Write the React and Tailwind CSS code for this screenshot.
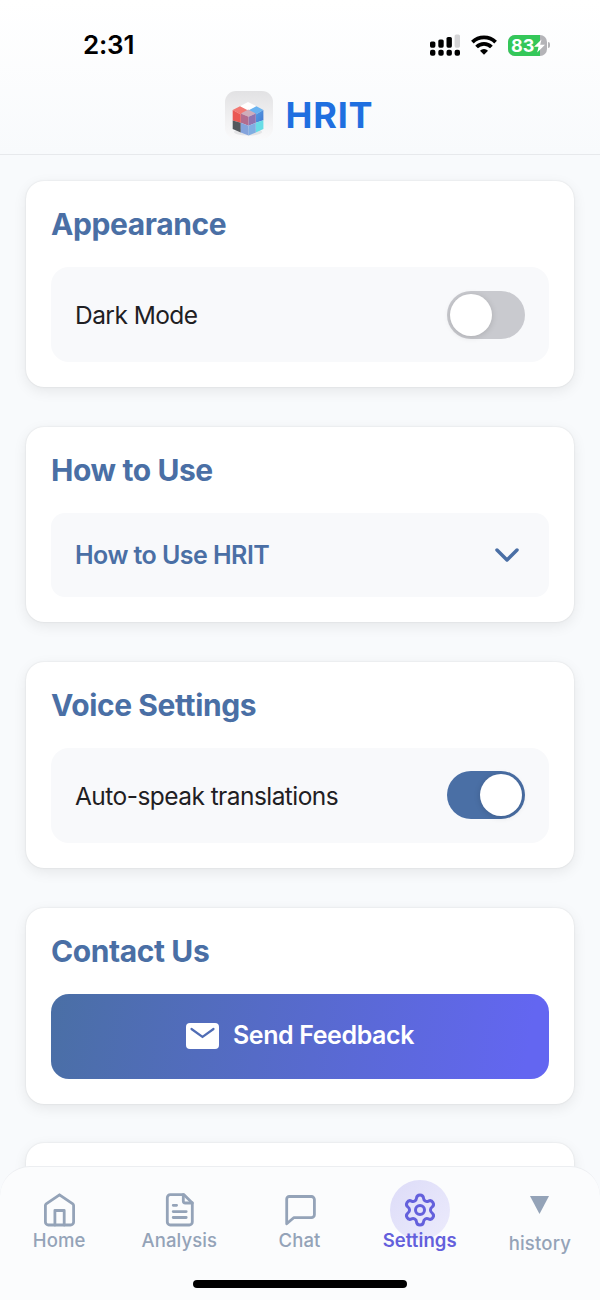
import React, { useState } from 'react';
import { ChevronDown, Settings } from 'lucide-react';
import clsx from 'clsx';

const StatusBar = () => (
  <div className="flex h-[89px] items-center justify-between pl-[83px] pr-[50px] pt-px">
    <span className="text-[26px] font-semibold leading-none tracking-[-0.2px] text-black">2:31</span>
    <div className="flex items-center gap-[11px]">
      <svg className="h-[22px] w-[30px]" viewBox="0 0 30 22">
        <rect x="0" y="7.5" width="5.4" height="6.2" rx="1.6" />
        <rect x="8.3" y="5.5" width="5.4" height="8.2" rx="1.6" />
        <rect x="16.5" y="3" width="5.4" height="10.7" rx="1.6" />
        <rect x="24.6" y="0.5" width="5.4" height="13.2" rx="1.6" fill="#d4d4d6" />
        <rect x="0" y="15.8" width="5.4" height="6" rx="2" />
        <rect x="8.3" y="15.8" width="5.4" height="6" rx="2" />
        <rect x="16.5" y="15.8" width="5.4" height="6" rx="2" />
        <rect x="24.6" y="15.8" width="5.4" height="6" rx="2" />
      </svg>
      <svg className="h-5 w-[26px]" viewBox="0 0 26 20" fill="none" stroke="#000" strokeWidth="3.8">
        <path d="M1.4 7.2a16.6 16.6 0 0 1 23.2 0" />
        <path d="M5.6 12a10.4 10.4 0 0 1 14.8 0" />
        <path d="M13 19.8l-4-4a5.6 5.6 0 0 1 8 0z" fill="#000" stroke="none" />
      </svg>
      <div className="flex items-center gap-px">
        <div className="relative flex h-[21px] w-[39px] items-center overflow-hidden rounded-[7px] bg-[#b4b4b8]">
          <div className="h-full w-[32px] bg-[#34c759]" />
          <span className="absolute left-[3px] top-[1px] text-[18px] font-bold leading-5 text-white">83</span>
          <svg className="absolute right-[2px] top-[4px] h-[14px] w-[11px]" viewBox="0 0 11 13" fill="#fff">
            <path d="M7.5 0L0 7.3h4.5L3.2 13 11 5.3H6.2z" />
          </svg>
        </div>
        <div className="h-[6px] w-[2px] rounded-r-full bg-[#b4b4b8]" />
      </div>
    </div>
  </div>
);

const Logo = () => (
  <svg className="h-12 w-12" viewBox="0 0 48 48">
    <defs>
      <linearGradient id="tile" x1="0" y1="0" x2="0" y2="1">
        <stop offset="0" stopColor="#e2e2e4" />
        <stop offset="0.6" stopColor="#f1f1f2" />
        <stop offset="1" stopColor="#fafafb" />
      </linearGradient>
      <linearGradient id="sky" x1="0" y1="0" x2="1" y2="1">
        <stop offset="0" stopColor="#559fe6" />
        <stop offset="1" stopColor="#4379d0" />
      </linearGradient>
    </defs>
    <rect width="48" height="48" rx="11" fill="url(#tile)" />
    <ellipse cx="23" cy="41" rx="14" ry="3.5" fill="#e4e4e6" />
    <path d="M15 15.2l8-4.2 8.4 4.2-8.2 5z" fill="#fff" />
    <path d="M7.7 19l7.3-3.8 8.2 4.4-7.4 4z" fill="#f27872" />
    <path d="M7.7 19l8.1 4.6v8.2l-8.1-2.3z" fill="#ea5853" />
    <path d="M7.7 29.5l8.1 2.3v9.6l-8.1-3.4z" fill="#54585d" />
    <path d="M23.2 19.6l8.2-4.4 7 3.8-7.6 4.4z" fill="#6ab4f1" />
    <path d="M30.8 23.4l7.6-4.4v10.3l-7.6 2.5z" fill="url(#sky)" />
    <path d="M30.8 31.8l7.6-2.5V38l-7.6 3.4z" fill="#68dde6" />
    <path d="M15.8 22.4l7.4-3.8 7.6 3.8-7.2 3.4z" fill="#cfadbb" />
    <path d="M15.8 22.4l7.8 3.4v9l-7.8-3z" fill="#b26c8e" />
    <path d="M30.8 22.4l-7.2 3.4v9l7.2-3z" fill="#8f74b0" />
    <path d="M15.8 31.8l7.8 3v9.7l-7.8-3.1z" fill="#84a3dc" />
    <path d="M30.8 31.8l-7.2 3v9.7l7.2-3.1z" fill="#80aee2" />
  </svg>
);

const Header = () => (
  <header className="h-[155px] border-b border-[#e7e9ec] bg-linear-to-b from-white to-[#f8fafc]">
    <StatusBar />
    <div className="flex items-center justify-center gap-[13px] pr-[2px] pt-px">
      <Logo />
      <h1 className="text-[36px] font-bold leading-[50px] tracking-[0.8px] text-[#1f6fe0]">HRIT</h1>
    </div>
  </header>
);

const Card = ({ title, children }) => (
  <section className="rounded-[18px] bg-white p-[25px] shadow-[0_0_2px_rgba(0,0,0,0.11),0_4px_14px_rgba(0,0,0,0.08)]">
    <h2 className="mb-[23.5px] text-[30px] font-bold leading-[37.5px] tracking-[-0.4px] text-[#4a6fa5]">{title}</h2>
    {children}
  </section>
);

const Toggle = ({ checked, onChange }) => (
  <button
    role="switch"
    aria-checked={checked}
    onClick={() => onChange(!checked)}
    className={clsx(
      'flex h-12 w-[78px] items-center rounded-full px-[3px] transition-colors',
      checked ? 'justify-end bg-[#4a6fa5]' : 'justify-start bg-[#c9cacf]'
    )}
  >
    <span className="h-[42px] w-[42px] rounded-full bg-white shadow-[0_1px_6px_rgba(0,0,0,0.15)]" />
  </button>
);

const ToggleRow = ({ label, checked, onChange }) => (
  <div className="flex h-[95px] items-center justify-between rounded-[18px] bg-[#f8f9fb] px-6">
    <span className="pt-px text-[24.5px] tracking-[-0.55px] text-[#1f2023]">{label}</span>
    <Toggle checked={checked} onChange={onChange} />
  </div>
);

const iconProps = {
  className: 'relative h-9 w-9',
  viewBox: '0 0 36 36',
  fill: 'none',
  stroke: 'currentColor',
  strokeWidth: 2.8,
  strokeLinecap: 'round',
  strokeLinejoin: 'round',
};

const HomeIcon = () => (
  <svg {...iconProps}>
    <path d="M18.5 2.8L5.2 11.9Q4.4 12.5 4.4 13.6V30a3 3 0 0 0 3 3h22.2a3 3 0 0 0 3-3V13.6q0-1.1-.8-1.7z" />
    <path d="M13.9 33V18.5h9.3V33" />
  </svg>
);

const FileIcon = () => (
  <svg {...iconProps}>
    <path d="M23 2.7H9.3a3 3 0 0 0-3 3V30a3 3 0 0 0 3 3h19a3 3 0 0 0 3-3V11z" />
    <path d="M22.3 2.7V9a2 2 0 0 0 2 2h7" />
    <path d="M12.2 13.3h3.4M12.2 19.6h13M12.2 25.5h13" />
  </svg>
);

const ChatIcon = () => (
  <svg {...iconProps}>
    <path d="M7.2 4.5h22.2a3 3 0 0 1 3 3v15.2a3 3 0 0 1-3 3H11.7L4.7 31.8V7a2.5 2.5 0 0 1 2.5-2.5z" />
  </svg>
);

const NavItem = ({ icon, label, active }) => (
  <button
    className={clsx(
      'flex flex-1 flex-col items-center text-[18.5px] tracking-[0.1px]',
      active ? 'font-semibold text-[#6460dc]' : 'font-medium text-[#94a3b8]'
    )}
  >
    <span className="relative">
      {active && <span className="absolute -inset-3 rounded-full bg-linear-to-br from-[#dddcf8] to-[#ecebfc]" />}
      {icon}
    </span>
    <span className="relative leading-6">{label}</span>
  </button>
);

const BottomNav = () => (
  <nav className="absolute inset-x-0 bottom-0 h-[134px] rounded-t-[30px] border-t border-[#eceef1] bg-[#fbfcfd] pt-[25px]">
    <div className="-ml-px flex">
      <NavItem icon={<HomeIcon />} label="Home" />
      <NavItem icon={<FileIcon />} label="Analysis" />
      <NavItem icon={<ChatIcon />} label="Chat" />
      <NavItem icon={<Settings className="relative h-9 w-9" strokeWidth={2} />} label="Settings" active />
      <button className="flex flex-1 flex-col items-center text-[18.5px] font-medium tracking-[0.2px] text-[#94a3b8]">
        <svg className="mb-[17px] mt-1 h-[18px] w-[19px]" viewBox="0 0 19 18" fill="currentColor">
          <path d="M0 0h19L9.5 18z" />
        </svg>
        <span className="leading-6">history</span>
      </button>
    </div>
    <div className="absolute bottom-[12px] left-[193px] h-2 w-[214px] rounded-full bg-black" />
  </nav>
);

const App = () => {
  const [darkMode, setDarkMode] = useState(false);
  const [autoSpeak, setAutoSpeak] = useState(true);

  return (
    <div className="relative h-[1300px] w-[600px] overflow-hidden bg-[#f8fafc] font-['Inter',sans-serif]">
      <Header />

      <main className="flex flex-col gap-[39.8px] px-[26px] pt-[26.3px]">
        <Card title="Appearance">
          <ToggleRow label="Dark Mode" checked={darkMode} onChange={setDarkMode} />
        </Card>

        <Card title="How to Use">
          <button className="flex h-[84px] w-full items-center justify-between rounded-[14px] bg-[#f8f9fb] px-6">
            <span className="pt-px text-[25px] font-semibold tracking-[-0.55px] text-[#4a6fa5]">How to Use HRIT</span>
            <ChevronDown className="-mr-[2px] h-10 w-10 text-[#4a6fa5]" strokeWidth={2.1} />
          </button>
        </Card>

        <Card title="Voice Settings">
          <ToggleRow label="Auto-speak translations" checked={autoSpeak} onChange={setAutoSpeak} />
        </Card>

        <Card title="Contact Us">
          <button className="flex h-[85px] w-full items-center justify-center gap-[14px] rounded-[18px] bg-linear-[100deg] from-[#4a6fa5] to-[#6366f1] to-95% text-white">
            <svg className="h-[26px] w-[33px]" viewBox="0 0 33 26">
              <rect width="33" height="26" rx="4" fill="#fff" />
              <path d="M5.5 6l11 8 11-8" fill="none" stroke="#506db5" strokeWidth="2.2" strokeLinecap="round" />
            </svg>
            <span className="text-[25px] font-semibold tracking-[-0.4px]">Send Feedback</span>
          </button>
        </Card>

        <Card title="About">
          <div className="h-[95px] rounded-[18px] bg-[#f8f9fb]" />
        </Card>
      </main>

      <BottomNav />
    </div>
  );
};

export default App;
